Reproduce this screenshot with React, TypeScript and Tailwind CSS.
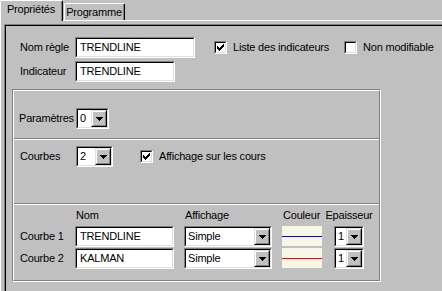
import React from 'react';

const font =
  "font-['Liberation_Sans',Arial,sans-serif] text-[11px] leading-[13px] tracking-[-0.2px] text-black";

const Sunken = ({
  className,
  children,
}: {
  className?: string;
  children?: React.ReactNode;
}) => (
  <div
    className={`border border-t-[#808080] border-l-[#808080] border-r-white border-b-white ${className ?? ''}`}
  >
    <div className="h-full w-full border border-t-black border-l-black border-r-[#dfdfdf] border-b-[#dfdfdf] bg-white">
      {children}
    </div>
  </div>
);

const TextBox = ({ className, value }: { className: string; value: string }) => (
  <Sunken className={`h-[21px] shrink-0 ${className}`}>
    <div className="flex h-full items-center whitespace-nowrap pl-[3px]">{value}</div>
  </Sunken>
);

const Arrow = () => (
  <svg width="7" height="4" viewBox="0 0 7 4" shapeRendering="crispEdges">
    <path d="M0 0h7v1H0z M1 1h5v1H1z M2 2h3v1H2z M3 3h1v1H3z" fill="#000" />
  </svg>
);

const Combo = ({ className, value }: { className: string; value: string }) => (
  <Sunken className={`h-[21px] shrink-0 ${className}`}>
    <div className="flex h-full">
      <div className="flex flex-1 items-center pl-[2px]">{value}</div>
      <div className="h-full w-[16px] border border-t-[#dfdfdf] border-l-[#dfdfdf] border-r-black border-b-black">
        <div className="flex h-full w-full items-center justify-center border border-t-white border-l-white border-r-[#808080] border-b-[#808080] bg-[#c0c0c0]">
          <Arrow />
        </div>
      </div>
    </div>
  </Sunken>
);

const Check = ({
  checked,
  label,
  className,
}: {
  checked?: boolean;
  label: string;
  className?: string;
}) => (
  <div className={`flex shrink-0 items-center ${className ?? ''}`}>
    <Sunken className="h-[13px] w-[13px]">
      <div className="flex h-full w-full items-center justify-center">
        {checked && (
          <svg width="7" height="7" viewBox="0 0 7 7" shapeRendering="crispEdges">
            <path
              d="M6 0h1v1H6z M5 1h2v1H5z M0 2h1v1H0z M4 2h3v1H4z M0 3h2v1H0z M3 3h3v1H3z M0 4h5v1H0z M1 5h3v1H1z M2 6h1v1H2z"
              fill="#000"
            />
          </svg>
        )}
      </div>
    </Sunken>
    <span className="ml-[6px] whitespace-nowrap">{label}</span>
  </div>
);

const Separator = () => (
  <div className="h-[2px] border-t border-b border-t-[#808080] border-b-white" />
);

const Swatch = ({ line }: { line: string }) => (
  <div className="flex h-[20px] w-[40px] shrink-0 items-center self-start bg-[#f7f7e7]">
    <div className={`h-px w-full ${line}`} />
  </div>
);

const CurveRow = ({
  label,
  name,
  line,
  className,
}: {
  label: string;
  name: string;
  line: string;
  className?: string;
}) => (
  <div className={`flex h-[21px] items-center ${className ?? ''}`}>
    <span className="w-[55px] shrink-0">{label}</span>
    <TextBox className="w-[99px]" value={name} />
    <Combo className="ml-[10px] w-[88px]" value="Simple" />
    <div className="ml-[10px] flex h-full">
      <Swatch line={line} />
    </div>
    <Combo className="ml-[12px] w-[30px]" value="1" />
  </div>
);

export default function App() {
  return (
    <div className={`h-[291px] w-[442px] overflow-hidden bg-[#c0c0c0] ${font}`}>
      {/* tabs */}
      <div className="flex h-[20px] items-end">
        <div className="relative z-10 -mb-px h-[21px] w-[63px] rounded-t-[2px] border-l border-t border-r border-l-white border-t-white border-r-black bg-[#c0c0c0]">
          <div className="flex h-full justify-center border-r border-[#808080] pt-[2px]">
            Propriétés
          </div>
        </div>
        <div className="ml-px h-[17px] w-[61px] rounded-t-[2px] border-l border-t border-r border-l-white border-t-white border-r-black">
          <div className="flex h-full justify-center border-r border-[#808080] pt-[2px]">
            Programme
          </div>
        </div>
      </div>

      {/* tab page */}
      <div className="h-[271px] border-l border-t border-white pl-[3px] pt-[3px]">
        <div className="h-[400px] w-[500px] border-l border-t border-[#808080]">
          <div className="h-full w-full border-l border-t border-black">
            <div className="pl-[14px] pt-[11px]">
              <div className="flex h-[21px] items-center">
                <span className="w-[55px] shrink-0">Nom règle</span>
                <TextBox className="w-[120px]" value="TRENDLINE" />
                <Check checked className="ml-[19px] w-[130px]" label="Liste des indicateurs" />
                <Check label="Non modifiable" />
              </div>
              <div className="mt-[3px] flex h-[21px] items-center">
                <span className="w-[55px] shrink-0">Indicateur</span>
                <TextBox className="w-[100px]" value="TRENDLINE" />
              </div>
            </div>

            <div className="ml-[6px] mt-[7px] h-[193px] w-[369px] border border-t-[#808080] border-l-[#808080] border-r-white border-b-white">
              <div className="h-full w-full border border-t-white border-l-white border-r-[#808080] border-b-[#808080]">
                <div className="flex h-[47px] items-start pl-[5px] pt-[17px]">
                  <div className="flex h-[21px] items-center">
                    <span className="w-[57px] shrink-0">Paramètres</span>
                    <Combo className="w-[33px]" value="0" />
                  </div>
                </div>
                <Separator />
                <div className="h-[63px] pl-[6px] pt-[6px]">
                  <div className="flex h-[21px] items-center">
                    <span className="w-[56px] shrink-0">Courbes</span>
                    <Combo className="w-[37px]" value="2" />
                    <Check checked className="ml-[27px]" label="Affichage sur les cours" />
                  </div>
                </div>
                <Separator />
                <div className="pl-[6px] pt-[4px]">
                  <div className="flex h-[13px]">
                    <span className="w-[55px] shrink-0" />
                    <span className="w-[99px] shrink-0 pl-px">Nom</span>
                    <span className="ml-[10px] w-[88px] shrink-0 pl-px">Affichage</span>
                    <span className="ml-[10px] w-[40px] shrink-0 pl-px whitespace-nowrap">Couleur</span>
                    <span className="ml-[12px] flex w-[30px] shrink-0 justify-center whitespace-nowrap">
                      Epaisseur
                    </span>
                  </div>
                  <CurveRow className="mt-[4px]" label="Courbe 1" name="TRENDLINE" line="bg-[#0000ff]" />
                  <CurveRow className="mt-px" label="Courbe 2" name="KALMAN" line="bg-[#ff0000]" />
                </div>
              </div>
            </div>
          </div>
        </div>
      </div>
    </div>
  );
}
